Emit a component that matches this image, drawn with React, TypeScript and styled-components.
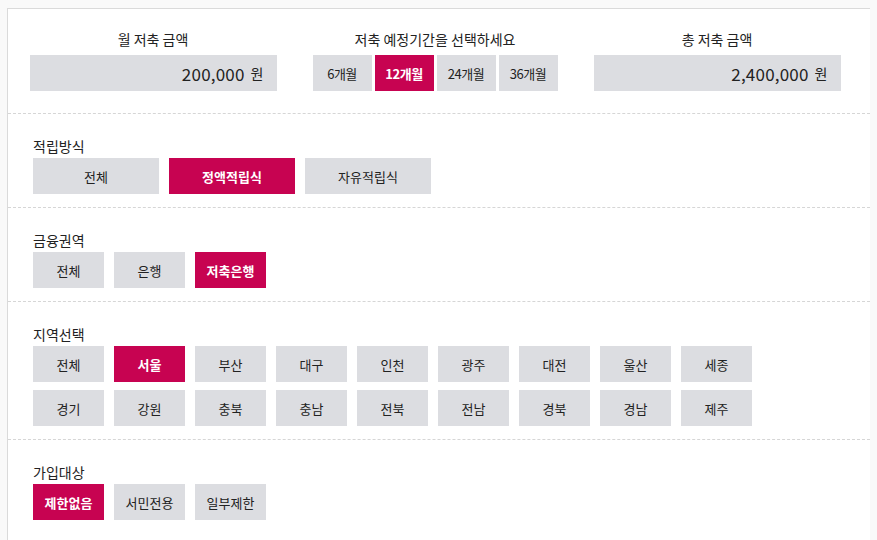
import styled, { createGlobalStyle } from "styled-components"

const GlobalStyle = createGlobalStyle`
  body {
    margin: 8px 7px;
    background: #f9f9f9;
    font-family: "Noto Sans CJK KR", "Noto Sans", sans-serif;
    color: #333;
  }
`

const ACCENT = "#c70351"

const periods = ["6개월", "12개월", "24개월", "36개월"]

const filters = [
  { title: "적립방식", wide: true, rows: [["전체", "정액적립식", "자유적립식"]], selected: "정액적립식" },
  { title: "금융권역", wide: false, rows: [["전체", "은행", "저축은행"]], selected: "저축은행" },
  {
    title: "지역선택",
    wide: false,
    rows: [
      ["전체", "서울", "부산", "대구", "인천", "광주", "대전", "울산", "세종"],
      ["경기", "강원", "충북", "충남", "전북", "전남", "경북", "경남", "제주"],
    ],
    selected: "서울",
  },
  { title: "가입대상", wide: false, rows: [["제한없음", "서민전용", "일부제한"]], selected: "제한없음" },
]

const App: React.FC = () => {
  return (
    <>
      <GlobalStyle />
      <Panel>
        <TopSection>
          <Column>
            <TopLabel>월 저축 금액</TopLabel>
            <AmountBox>
              <Amount>200,000</Amount>
              <Unit>원</Unit>
            </AmountBox>
          </Column>
          <Column>
            <TopLabel>저축 예정기간을 선택하세요</TopLabel>
            <PeriodGroup>
              {periods.map((p) => (
                <PeriodButton key={p} $active={p === "12개월"}>
                  {p}
                </PeriodButton>
              ))}
            </PeriodGroup>
          </Column>
          <Column>
            <TopLabel>총 저축 금액</TopLabel>
            <AmountBox>
              <Amount>2,400,000</Amount>
              <Unit>원</Unit>
            </AmountBox>
          </Column>
        </TopSection>

        {filters.map((f) => (
          <FilterSection key={f.title}>
            <SectionLabel>{f.title}</SectionLabel>
            <Rows>
              {f.rows.map((row, i) => (
                <ButtonRow key={i} $gap={f.wide ? 10 : 10}>
                  {row.map((item) => (
                    <OptionButton key={item} $wide={f.wide} $active={item === f.selected}>
                      {item}
                    </OptionButton>
                  ))}
                </ButtonRow>
              ))}
            </Rows>
          </FilterSection>
        ))}
      </Panel>
    </>
  )
}

const Panel = styled.div`
  width: 862px;
  min-height: 560px;
  background: #fff;
  border: 1px solid #dadada;
`

const TopSection = styled.div`
  display: grid;
  grid-template-columns: repeat(3, 282px);
  padding: 22px 11px 22px 4px;
  border-bottom: 1px dashed #d6d6d6;
`

const Column = styled.div`
  display: flex;
  flex-direction: column;
  align-items: center;
`

const TopLabel = styled.div`
  font-size: 14px;
  line-height: 16px;
  color: #222;
  margin-bottom: 8px;
`

const AmountBox = styled.div`
  width: 247px;
  height: 36px;
  box-sizing: border-box;
  background: #dcdde1;
  display: flex;
  align-items: center;
  justify-content: flex-end;
  padding-right: 13px;
  gap: 6px;
  color: #222;
`

const Amount = styled.span`
  font-size: 17px;
  letter-spacing: 0.2px;
`

const Unit = styled.span`
  font-size: 14px;
`

const PeriodGroup = styled.div`
  display: flex;
  gap: 3px;
`

const PeriodButton = styled.div<{ $active: boolean }>`
  width: 59px;
  height: 36px;
  display: flex;
  align-items: center;
  justify-content: center;
  font-size: 13px;
  letter-spacing: -0.5px;
  background: ${(p) => (p.$active ? ACCENT : "#dcdde1")};
  color: ${(p) => (p.$active ? "#fff" : "#222")};
  font-weight: ${(p) => (p.$active ? 700 : 400)};
`

const FilterSection = styled.div`
  padding: 24px 25px 13px;
  border-bottom: 1px dashed #d6d6d6;

  &:last-child {
    border-bottom: none;
  }
`

const SectionLabel = styled.div`
  font-size: 14px;
  line-height: 16px;
  color: #222;
  margin-bottom: 4px;
`

const Rows = styled.div`
  display: flex;
  flex-direction: column;
  gap: 8px;
`

const ButtonRow = styled.div<{ $gap: number }>`
  display: flex;
  gap: ${(p) => p.$gap}px;
`

const OptionButton = styled.div<{ $wide: boolean; $active: boolean }>`
  width: ${(p) => (p.$wide ? 126 : 71)}px;
  height: 36px;
  display: flex;
  align-items: center;
  justify-content: center;
  font-size: 13px;
  background: ${(p) => (p.$active ? ACCENT : "#dcdde1")};
  color: ${(p) => (p.$active ? "#fff" : "#222")};
  font-weight: ${(p) => (p.$active ? 700 : 400)};
`

export default App
